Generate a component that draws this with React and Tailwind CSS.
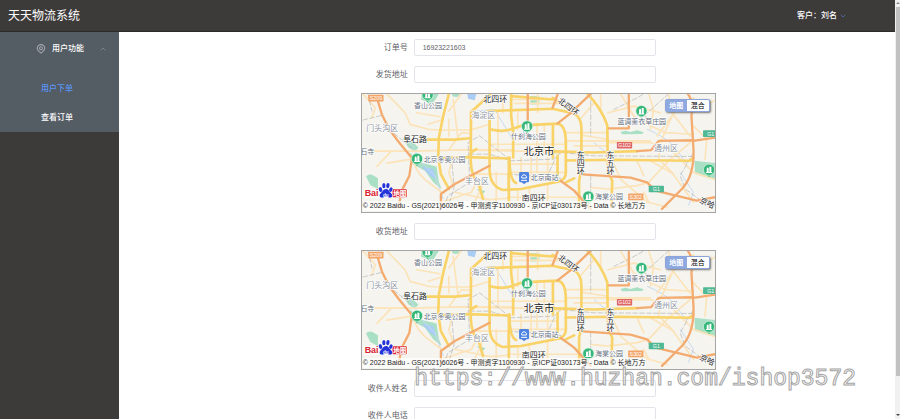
import { useState } from 'react';
import { ChevronDown, ChevronUp } from 'lucide-react';

const pageFont = "font-['Liberation_Sans','Noto_Sans_CJK_SC',sans-serif]";

const minorRoads = [
  'M75 3 L130 60 L145 95 L200 110 L230 112',
  'M3 176 H150 L300 172 L480 176 L600 182',
  'M45 222 L75 190 L88 176 M75 212 L150 200',
  'M3 3 L40 45 L30 75',
  'M150 200 L170 240 L190 262 L240 300',
  'M165 60 L235 72 M200 95 L240 82',
  'M262 55 L300 3 M262 80 L262 130 M235 112 H325 M275 20 L290 140',
  'M262 172 L300 120 L325 122 M275 195 L262 240 L275 280',
  'M385 155 H615 M328 112 L385 95 M345 172 H450',
  'M410 60 V170 M425 3 V60 M470 60 V110 M528 92 V240 M550 92 V180',
  'M480 195 V265 M510 195 V265 M560 195 V240 M450 215 H590 M450 240 H610',
  'M345 245 L440 245 L440 290 M405 240 V330 M365 275 L340 330',
  'M470 290 V345 M505 285 V345 M560 275 V345 M440 315 H650',
  'M280 300 L385 322 L440 318 M240 330 L330 300 L345 270',
  'M455 20 H580 M460 32 H600 M530 3 V60',
  'M615 120 H742 M615 145 H870 M640 160 H742 M662 128 L742 140',
  'M700 30 L662 75 M720 3 V60 M742 60 L820 40 L900 60',
  'M780 3 L820 70 L860 95 L915 120 L1000 125',
  'M742 150 L870 150 L935 175 L1000 240 L1065 262',
  'M865 3 L880 50 L870 110 M925 3 L935 60 L990 130',
  'M1000 60 L1065 22 M1000 100 L1040 140 L1035 200',
  'M760 215 L780 260 L860 330 M830 205 L850 250 M870 205 L940 245',
  'M690 285 L742 290 L830 280 L865 270 L920 210 L990 150',
  'M850 300 L865 330 L920 345 M905 210 L935 240 L1000 330',
  'M940 60 L900 150 L895 205 M1000 15 L950 50 L890 130',
];

const yellowRoads = [
  'M262 3 L245 70 L232 135 L230 195 L238 245 L262 290',
  'M195 141 H280 L325 137',
  'M364 26 L329 58 L328 205 Q330 255 352 275 L365 320',
  'M364 26 L385 5',
  'M380 55 L575 48 L640 62 Q662 75 662 108 V232 L655 265 L655 345',
  'M385 62 V235 Q387 282 425 293 L480 290 L592 268 Q615 262 615 240 V150',
  'M385 110 Q430 120 455 108 L485 98 L590 93 Q615 97 615 150',
  'M450 3 V70 L456 115 V195 M443 195 V345',
  'M445 196 Q445 265 465 272 M590 190 V250',
  'M576 95 V195 M560 176 L700 180 L830 176',
  'M230 197 L320 194 L445 198',
  'M450 10 L575 20 M575 15 L640 60',
  'M680 3 Q722 45 740 98 L742 235 L755 265 L752 345',
  'M615 204 L760 202 L990 205 L1000 195',
  'M640 258 L615 270 M345 170 L328 180',
];

const orangeRoads = [
  'M48 25 L60 65 L82 110 L112 150 L150 196',
  'M150 200 L143 250 L120 295 L110 345',
  'M238 345 V305 L280 275 L385 220',
  'M590 92 L625 65 L690 3 M575 45 L590 5 M500 3 V90',
  'M600 266 L640 295 L690 350',
  'M665 246 L810 256 L860 270 L885 295 L1010 325 L1065 315',
  'M805 3 V107 H745',
  'M983 3 Q1000 25 994 70 L1000 170 Q1003 250 965 290 L905 350',
  'M1000 143 L895 145 L872 173 L830 176 M1000 145 L1065 135',
];

const railways = [
  'M3 82 L60 68 M18 3 L30 55 M80 110 L150 165',
  'M245 345 L260 310 L325 270 L320 150 L355 130 L450 205',
  'M325 185 H385 L450 205 L580 200 L600 180 L700 190 L1000 192',
  'M690 3 V130 M270 195 L278 285 L260 345 M580 205 L555 260',
  'M440 245 L600 258 M690 250 V345 M1000 180 L960 250 L975 290 L1050 345',
  'M760 50 L830 15 L850 3 M925 3 L850 70 L900 90 M900 160 L865 175',
];

const districts = [
  ['门头沟区', 61, 114],
  ['海淀区', 366, 76],
  ['丰台区', 347, 276],
  ['通州区', 917, 175],
];

const places = [
  ['香山公园', 199, 45],
  ['什刹海公园', 502, 140],
  ['北京冬奥公园', 249, 210],
  ['蓝调薰衣草庄园', 844, 94],
  ['北京南站', 551, 264],
  ['海棠公园', 745, 321],
  ['石寺', 16, 184],
];

const parkPins = [
  [198, 6],
  [498, 101],
  [166, 199],
  [843, 55],
  [1047, 232],
  [683, 313],
];

const shields = [
  ['S209', 42, 16, '#f3a467'],
  ['G102', 792, 158, '#e06565'],
  ['G1', 888, 290, '#4fb894'],
  ['S302', 826, 314, '#f3a467'],
  ['G1', 1052, 123, '#4fb894'],
];

function ParkPin({ x, y }) {
  return (
    <g transform={`translate(${x} ${y})`}>
      <path d="M0 22 L-8 13 H8Z" fill="#35b779" />
      <circle r="17" fill="#35b779" stroke="#e9f7ef" strokeWidth="2" />
      <path d="M-7 8 V-4 Q-4 -10 -1 -4 V8Z M1 8 V-9 H7 V8Z M-9 7 H9 V10 H-9Z" fill="#fff" />
    </g>
  );
}

function BaiduLogo() {
  return (
    <g>
      <rect x="5" y="289" width="133" height="28" rx="5" fill="#fff" opacity=".75" />
      <text x="8" y="312" fontSize="27" fontWeight="bold" fill="#d9232e">Bai</text>
      <rect x="92" y="291" width="43" height="24" rx="2" fill="#d9232e" />
      <text x="114" y="310" fontSize="20" fontWeight="bold" fill="#fff" textAnchor="middle">地图</text>
      <g fill="#2534d8" stroke="#fff" strokeWidth="2" paintOrder="stroke">
        <ellipse cx="56" cy="292" rx="5" ry="8" transform="rotate(-20 56 292)" />
        <ellipse cx="66" cy="280" rx="5" ry="8" />
        <ellipse cx="78" cy="280" rx="5" ry="8" transform="rotate(12 78 280)" />
        <ellipse cx="87" cy="292" rx="5" ry="7" transform="rotate(25 87 292)" />
        <path d="M72 290 C64 290 62 299 57 302 C50 307 53 318 63 316 C70 314 75 314 82 316 C92 318 94 307 87 302 C82 298 81 290 72 290Z" />
      </g>
      <text x="72" y="313" fontSize="14" fontWeight="bold" fill="#fff" textAnchor="middle">du</text>
    </g>
  );
}

function MapDrawing() {
  return (
    <svg viewBox="0 3 1065 357" preserveAspectRatio="xMidYMid slice" className="block h-full w-full" aria-label="北京市">
      <rect width="1065" height="360" fill="#f5f4ef" />
      <g fill="#a9dfc4">
        <path d="M180 3 H232 L218 25 L208 40 L196 28 L178 20Z" />
        <path d="M122 135 L150 145 L170 165 L160 178 L140 165Z" />
        <path d="M145 180 L175 210 L225 222 L232 270 L240 290 L215 270 L190 235 L152 215Z" />
        <path d="M12 252 Q25 240 38 252 L48 258 V290 L25 278Z" />
        <path d="M508 10 H535 V35 H508Z" />
        <path d="M1003 205 L1065 212 V262 L1005 245Z" />
        <path d="M780 118 L795 114 L810 118 L830 113 L850 119 L845 124 L785 125Z" />
        <path d="M270 3 H295 L290 12 H275Z M345 290 L372 296 L365 305Z" />
      </g>
      <g fill="#a9cdf5">
        <path d="M318 3 H345 L340 22 L320 18Z" />
        <path d="M485 110 L495 125 L488 130Z M180 222 L215 230 L225 262 L205 250Z" />
      </g>
      <path
        d="M145 150 L180 210 L220 250 L245 320 M860 110 Q910 130 940 160 L980 215 M700 150 L760 200 M960 240 L1000 300 L985 340 M345 55 L400 50 L460 150"
        fill="none"
        stroke="#c6daf2"
        strokeWidth="3"
      />
      <g fill="none" strokeLinejoin="round" strokeLinecap="round">
        {minorRoads.map((d) => <path key={d} d={d} stroke="#fce3b8" strokeWidth="5" />)}
        {railways.map((d) => <path key={d} d={d} stroke="#b3b3b3" strokeWidth="2" strokeDasharray="14 7" />)}
        {yellowRoads.map((d) => <path key={d} d={d} stroke="#f9d368" strokeWidth="8" />)}
        {orangeRoads.map((d) => <path key={d} d={d} stroke="#f3ab70" strokeWidth="7" />)}
      </g>

      {shields.map(([name, x, y, fill]) => (
        <g key={name + x}>
          <rect x={x - 23} y={y - 10} width="46" height="20" rx="2" fill={fill} />
          <text x={x} y={y + 6} fontSize="16" fill="#fff" textAnchor="middle">{name}</text>
        </g>
      ))}
      {parkPins.map(([x, y]) => <ParkPin key={x} x={x} y={y} />)}
      <g>
        <path d="M478 243 H500 V266 H494 L489 271 L484 266 H478Z" fill="#4d82e0" stroke="#4d82e0" strokeWidth="8" strokeLinejoin="round" />
        <path d="M482 257 V252 Q489 242 496 252 V257Z M480 264 H498" fill="none" stroke="#fff" strokeWidth="3" />
      </g>

      <g textAnchor="middle" stroke="#fff" strokeWidth="4" paintOrder="stroke" strokeLinejoin="round">
        {districts.map(([name, x, y]) => <text key={name} x={x} y={y} fontSize="24" fill="#8b92a0">{name}</text>)}
        {places.map(([name, x, y]) => <text key={name} x={x} y={y} fontSize="21" fill="#666f80">{name}</text>)}
        <g fill="#222" fontSize="24">
          <text x="402" y="27">北四环</text>
          <text x="622" y="50" transform="rotate(38 622 42)">北四环</text>
          <text x="518" y="327">南四环</text>
          <text x="160" y="148">阜石路</text>
          <text x="1042" y="341" transform="rotate(25 1042 332)">京哈</text>
          <text x="534" y="189" fontSize="31">北京市</text>
          {['东', '四', '环'].map((c, i) => <text key={c} x="660" y={196 + i * 24}>{c}</text>)}
          {['东', '五', '环'].map((c, i) => <text key={c} x="750" y={196 + i * 24}>{c}</text>)}
        </g>
      </g>
      <BaiduLogo />
    </svg>
  );
}

function AddressMap() {
  const [mode, setMode] = useState('地图');

  return (
    <div className="relative h-[120px] w-full max-w-[355px] overflow-hidden border border-[#a5a5a5]">
      <MapDrawing />
      <div className="absolute top-[5px] right-[5px] flex rounded-xs border border-[#8ba4dc] bg-white text-[7px] leading-[11px] shadow-[1px_1px_2px_#777]">
        {['地图', '混合'].map((name) => (
          <button
            key={name}
            type="button"
            onClick={() => setMode(name)}
            className={mode === name ? 'w-[21px] bg-[#8ea8e0] font-bold text-white' : 'w-[22px] text-black'}
          >
            {name}
          </button>
        ))}
      </div>
      <p className="absolute bottom-px left-px bg-white/70 text-[7px] leading-[10px] whitespace-nowrap text-[#222]">
        © 2022 Baidu - GS(2021)6026号 - 甲测资字1100930 - 京ICP证030173号 - Data © 长地万方
      </p>
    </div>
  );
}

function Field({ id, label, value }) {
  return (
    <div className="flex items-center gap-1.5">
      <label htmlFor={id} className="w-[47px] shrink-0 text-right text-[8px] leading-4 whitespace-nowrap text-[#606266]">{label}</label>
      <input
        id={id}
        type="text"
        defaultValue={value}
        className="h-[17px] w-full max-w-[242px] rounded-xs border border-[#e2e4e9] bg-white px-2 text-[7px] text-[#606266] outline-none"
      />
    </div>
  );
}

function LocationIcon() {
  return (
    <svg viewBox="0 0 24 24" className="h-[10px] w-[10px]" fill="none" stroke="#a3a7ad" strokeWidth="2.5">
      <path d="M12 22 C6 17 3 14 3 10 A9 8.5 0 0 1 21 10 C21 14 18 17 12 22Z" />
      <circle cx="12" cy="10" r="3.5" />
    </svg>
  );
}

function Sidebar() {
  return (
    <aside className="w-[119px] shrink-0 bg-[#3d3a3a]">
      <nav className="bg-[#545c64] text-[8px] font-medium text-white">
        <button type="button" className="flex h-[34px] w-full items-center pr-3 pl-9">
          <LocationIcon />
          <span className="ml-1.5">用户功能</span>
          <ChevronUp size={8} className="ml-auto text-[#909399]" />
        </button>
        <div className="flex flex-col pt-2">
          <a href="#order" className="flex h-[29px] items-center pl-[41px] text-[#5a94f5]">用户下单</a>
          <a href="#list" className="flex h-[29px] items-center pl-[41px]">查看订单</a>
        </div>
      </nav>
    </aside>
  );
}

export default function App() {
  return (
    <div className={`relative flex h-screen overflow-hidden bg-white ${pageFont}`}>
      <div className="flex min-w-0 flex-1 flex-col">
        <header className="flex h-8 shrink-0 items-center justify-between border-b border-[#2c2a2a] bg-[#3d3a3a] pr-12 pl-2 text-white">
          <h1 className="text-[12px]">天天物流系统</h1>
          <button type="button" className="flex items-center gap-0.5 text-[8px] font-medium">
            客户：刘名
            <ChevronDown size={8} className="text-[#4f7fd0]" />
          </button>
        </header>
        <div className="flex min-h-0 flex-1">
          <Sidebar />
          <main className="min-w-0 flex-1 overflow-hidden pt-[7px] pl-[27%]">
            <form className="flex flex-col gap-2.5">
              <Field id="order-no" label="订单号" value="16923221603" />
              <Field id="from" label="发货地址" />
              <AddressMap />
              <Field id="to" label="收货地址" />
              <AddressMap />
              <Field id="receiver" label="收件人姓名" />
              <Field id="phone" label="收件人电话" />
            </form>
          </main>
        </div>
      </div>

      {/* Scrollbar */}
      <div className="flex w-[5px] shrink-0 flex-col items-center justify-between bg-[#f1f1f1]">
        <svg viewBox="0 0 5 7" className="h-[7px] w-[5px] shrink-0"><path d="M1 4 L3 2 L5 4Z" fill="#888" /></svg>
        <div className="mb-auto h-[88%] w-1 self-end bg-[#c1c1c1]" />
        <svg viewBox="0 0 5 7" className="h-[7px] w-[5px] shrink-0"><path d="M1 2 L3 4 L5 2Z" fill="#444" /></svg>
      </div>

      {/* Watermark */}
      <p className="pointer-events-none absolute right-11 bottom-6 font-['Liberation_Mono',monospace] text-[23px] leading-8 text-white/70 [-webkit-text-stroke:1px_#a5a5a5]">
        https://www.huzhan.com/ishop3572
      </p>
    </div>
  );
}
